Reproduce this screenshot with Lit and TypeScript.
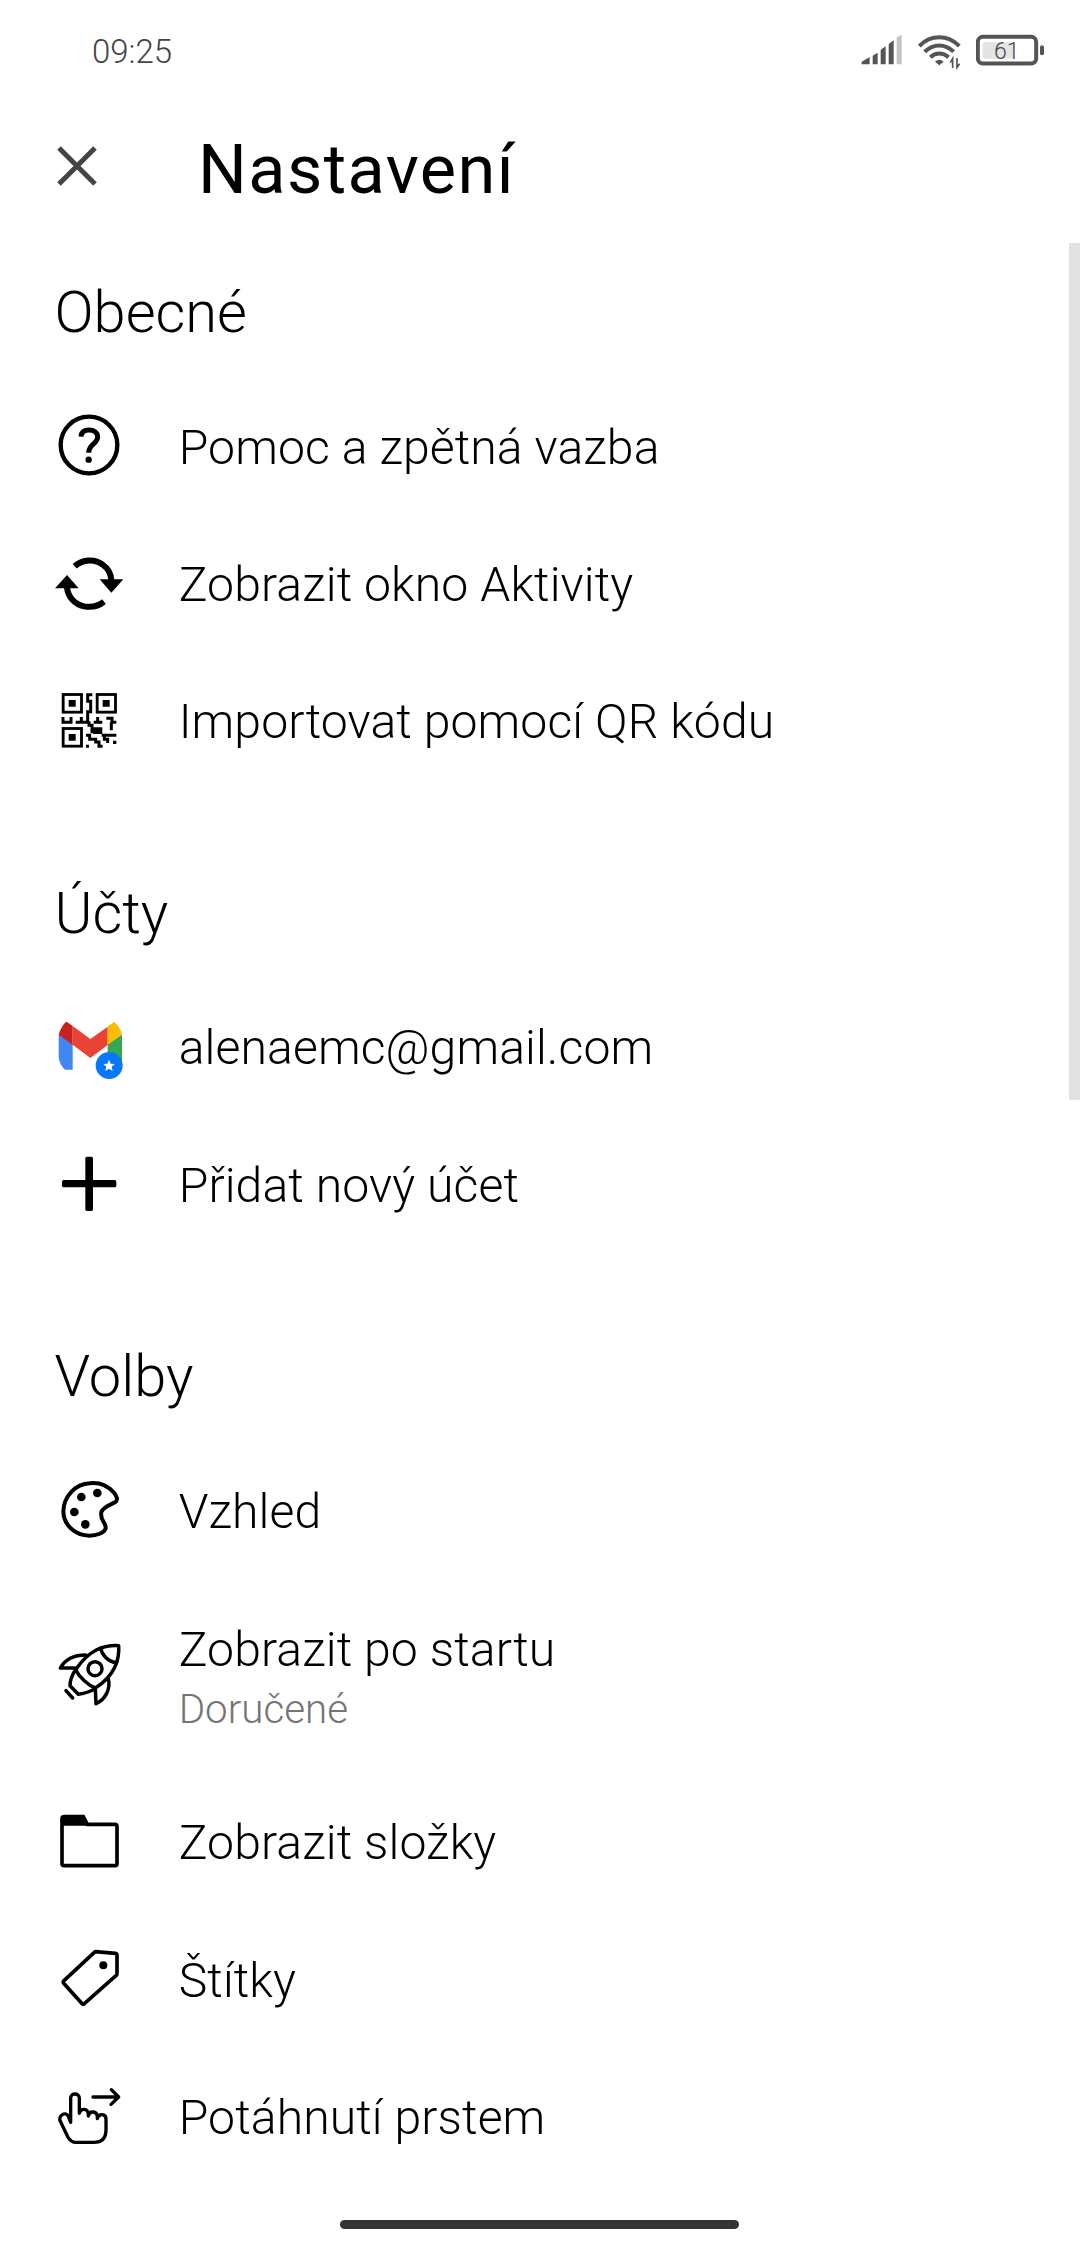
import { LitElement, html, css, svg, nothing, TemplateResult } from "lit";
import { customElement, property } from "lit/decorators.js";

type Item = { icon: string; label: string; note?: string };
type Section = { title: string; items: Item[] };

const SECTIONS: Section[] = [
  {
    title: "Obecné",
    items: [
      { icon: "help", label: "Pomoc a zpětná vazba" },
      { icon: "sync", label: "Zobrazit okno Aktivity" },
      { icon: "qr", label: "Importovat pomocí QR kódu" },
    ],
  },
  {
    title: "Účty",
    items: [
      { icon: "gmail", label: "alenaemc@gmail.com" },
      { icon: "plus", label: "Přidat nový účet" },
    ],
  },
  {
    title: "Volby",
    items: [
      { icon: "palette", label: "Vzhled" },
      { icon: "rocket", label: "Zobrazit po startu", note: "Doručené" },
      { icon: "folder", label: "Zobrazit složky" },
      { icon: "tag", label: "Štítky" },
      { icon: "swipe", label: "Potáhnutí prstem" },
    ],
  },
];

// Each glyph is drawn on a 216-unit square whose top offset is `top`.
const ICONS: Record<string, { top: number; art: TemplateResult }> = {
  help: {
    top: 28,
    art: svg`
      <circle cx="148" cy="136" r="85" fill="none" stroke="#000" stroke-width="13"/>
      <path d="M124 111C125 98 134 91 148 91C164 91 174 99 174 112C174 132 147 134 147 159" fill="none" stroke="#000" stroke-width="15"/>
      <circle cx="147" cy="180" r="9.500"/>`,
  },
  sync: {
    top: 440,
    art: svg`
      <path d="M105 498C130 476 166 475 189 493C206 505 214 520 215 540" fill="none" stroke="#000" stroke-width="18"/>
      <path d="M180 537H251L215 577Z"/>
      <path d="M82 562C85 590 105 612 133 618C156 622 176 618 193 604" fill="none" stroke="#000" stroke-width="18"/>
      <path d="M46 564H117L82 524Z"/>`,
  },
  qr: {
    top: 12,
    art: svg`
      <g fill="none" stroke="#000" stroke-width="8.500">
        <rect x="70.500" y="43.500" width="55" height="53"/>
        <rect x="172.500" y="43.500" width="55" height="53"/>
        <rect x="70.500" y="145.500" width="55" height="53"/>
      </g>
      <path d="M87 60h21v20H87zM189 60h21v20h-21zM87 162h21v20H87z"/>
      <g fill="none" stroke="#000" stroke-width="9">
        <path d="M158 44H144V64H153V95H144V126"/>
        <path d="M70 111V127H94V111M108 127H144M125 111V127M148 124V136H157V160M162 127H188M174 111V127"/>
        <path d="M200 115H217V127H230M215 127V151"/>
        <path d="M139 166H150V178H168V186H178V199H189M186 166H230M194 166V178H204V189M139 199H148"/>
      </g>
      <path d="M160 142h28v20h-28zM220 182h10v10h-10z"/>`,
  },
  gmail: {
    top: 30,
    art: svg`
      <path d="M57 103L99 133V209H76Q60 196 57 172Z" fill="#4285f4"/>
      <path d="M204 133L247 103V209H204Z" fill="#34a853"/>
      <path d="M82 66L99 78V135L57 104Q62 84 78 66Z" fill="#c5221f"/>
      <path d="M99 78L152 117L204 80V135L152 174L99 134Z" fill="#ea4335"/>
      <path d="M204 79L224 66Q241 80 247 104L204 134Z" fill="#fbbc04"/>
      <circle cx="208.500" cy="196.500" r="40.500" fill="#0877f9"/>
      <path d="M208 179L213 191L225 192L216 200L219 213L208 206L197 213L200 200L191 192L203 191Z" fill="#fff"/>`,
  },
  plus: {
    top: 442,
    art: svg`
      <rect x="67" y="541" width="163" height="22" rx="5"/>
      <rect x="137" y="471" width="23" height="163" rx="5"/>`,
  },
  palette: {
    top: 39,
    art: svg`
      <path d="M150 70C180 66 206 80 222 97C232 108 236 121 226 127C210 135 192 140 185 156C180 182 200 188 198 205C194 219 170 227 150 227C105 226 72 195 71 154C72 108 108 72 150 70Z" fill="none" stroke="#000" stroke-width="12"/>
      <circle cx="173" cy="99" r="13"/><circle cx="125" cy="111" r="13"/>
      <circle cx="104" cy="156" r="13"/><circle cx="137" cy="193" r="13"/>`,
  },
  rocket: {
    top: 56,
    art: svg`
      <g fill="none" stroke="#000" stroke-width="10.500" stroke-linejoin="round" stroke-linecap="round">
        <path d="M237 76C190 74 148 89 108 148C118 170 145 195 167 203C226 167 240 116 237 76Z"/>
        <path d="M183 84C187 104 204 122 229 128"/>
        <circle cx="166" cy="145" r="21"/>
        <path d="M138 104C98 104 76 118 62 143H106"/>
        <path d="M107 149C96 166 91 180 91 196L116 222C135 219 151 215 166 205"/>
        <path d="M206 176C214 206 196 238 169 250L167 206"/>
        <path d="M79 211L99 233"/>
      </g>`,
  },
  folder: {
    top: 13,
    art: svg`
      <path d="M67 55Q67 48 74 48H131L143 71H226Q232 71 232 77V189Q232 195 226 195H74Q67 195 67 189Z" fill="none" stroke="#000" stroke-width="11"/>
      <path d="M66 47H131L143 75H66Z"/>`,
  },
  tag: {
    top: 425,
    art: svg`
      <path d="M168 454L227 459Q232 460 232 465V520Q232 524 228 527L134 610Q130 613 126 609L72 549Q69 545 73 541L164 456Q166 454 168 454Z" fill="none" stroke="#000" stroke-width="11"/>
      <circle cx="191" cy="495" r="12"/>`,
  },
  swipe: {
    top: 27,
    art: svg`
      <g fill="none" stroke="#000" stroke-width="10" stroke-linejoin="round" stroke-linecap="round">
        <path d="M93 154V81C93 65 119 65 119 81V127C121 111 145 110 146 130V135C149 118 172 119 173 138V143C177 125 199 128 199 144V176C199 200 187 214 162 214H108C96 214 91 208 85 199L62 151C55 135 76 120 85 134L93 154"/>
        <path d="M160 78H236M215 56L237 78L214 100"/>
      </g>`,
  },
};

@customElement("setting-icon")
class SettingIcon extends LitElement {
  @property() name = "";
  static styles = css`
    :host { display: block; width: 72px; height: 72px; }
    svg { display: block; width: 100%; height: 100%; overflow: visible; }
  `;
  render() {
    const icon = ICONS[this.name];
    if (!icon) return nothing;
    return html`<svg viewBox="40 ${icon.top} 216 216" aria-hidden="true">${icon.art}</svg>`;
  }
}

@customElement("status-bar")
class StatusBar extends LitElement {
  static styles = css`
    :host {
      display: flex; align-items: center; justify-content: space-between;
      box-sizing: border-box; height: 101px; padding: 0 35px 0 92px;
    }
    .clock { font-size: 33px; line-height: 38px; font-weight: 300; color: #444; padding-top: 2px; }
    .icons { display: flex; gap: 15px; }
    svg { display: block; height: 60px; }
    .signal { width: 42px; }
    .wifi { width: 43.300px; }
    .battery { width: 69px; }
    .level { font: 300 69px Roboto, sans-serif; }
  `;
  render() {
    return html`
      <div class="clock">09:25</div>
      <div class="icons">
        <svg class="signal" viewBox="64 2 126 180" fill="#555">
          <path d="M66 124L90 110V132H66ZM99 109Q99 106 102 104L114 97V132H99ZM123 92Q123 88 126 86L138 78V132H123ZM147 74Q147 71 150 69L162 60V132H147Z"/>
          <path d="M171 54Q171 51 174 49L186 44V132H171Z" fill="#c4c4c4"/>
        </svg>
        <svg class="wifi" viewBox="233 2 130 180" fill="none" stroke="#555" stroke-width="12">
          <path d="M237 77C271 42 322 42 357 77"/>
          <path d="M253 94C280 69 314 69 340 94"/>
          <path d="M270 111C286 96 308 96 325 111"/>
          <path d="M284 124Q297 113 310 124L297 135Z" fill="#555" stroke="none"/>
          <path d="M337 143V115L330 127M350 113V141L358 130" stroke-width="5"/>
        </svg>
        <svg class="battery" viewBox="408 2 207 180">
          <rect x="413.500" y="49.500" width="175" height="80" rx="15" fill="none" stroke="#555" stroke-width="12"/>
          <rect x="428" y="65" width="92" height="50" rx="8" fill="#e4e4e4"/>
          <rect x="600" y="75" width="12" height="30" rx="6" fill="#555"/>
          <text class="level" x="462" y="117" fill="#444">61</text>
        </svg>
      </div>
    `;
  }
}

@customElement("app-root")
class AppRoot extends LitElement {
  static styles = css`
    :host {
      display: flex; flex-direction: column; position: relative;
      box-sizing: border-box; width: 1080px; height: 2248px; overflow: hidden;
      background: #fff; color: #000; font-family: Roboto, "Noto Sans", sans-serif;
    }
    .header { display: flex; align-items: center; box-sizing: border-box; height: 141px; padding-left: 57px; padding-bottom: 4px; gap: 101px; }
    .close { display: block; width: 40px; height: 40px; margin-bottom: 7px; }
    .title { margin: 0; font-size: 68.500px; line-height: 80px; font-weight: 400; letter-spacing: 1.400px; }
    .list { flex: 1; }
    .heading {
      margin: 0; box-sizing: border-box; height: 188.700px; padding-top: 90px;
      font-size: 57.750px; line-height: 68px; font-weight: 330; padding-left: 54.500px;
    }
    .section:first-child .heading { height: 134.600px; padding-top: 35.900px; }
    .row { display: flex; align-items: center; height: 137.330px; padding-left: 53.300px; gap: 53.400px; }
    .row.tall { height: 194.330px; }
    .text { display: flex; flex-direction: column; padding-top: 5px; gap: 8px; }
    .label { font-size: 48.125px; line-height: 56px; font-weight: 330; letter-spacing: 0.100px; }
    .note { font-size: 40.300px; line-height: 48px; font-weight: 330; color: #757575; }
    .scrollbar { position: absolute; right: 0; top: 243px; width: 11px; height: 857px; background: #e2e2e2; }
    .home { position: absolute; left: 340px; top: 2220px; width: 399px; height: 9px; border-radius: 5px; background: #333; }
  `;
  render() {
    return html`
      <status-bar></status-bar>
      <header class="header">
        <svg class="close" viewBox="0 0 40 40"><path d="M2 2L38 38M38 2L2 38" stroke="#444" stroke-width="5"/></svg>
        <h1 class="title">Nastavení</h1>
      </header>
      <main class="list">
        ${SECTIONS.map(
          (s) => html`<section class="section">
            <h2 class="heading">${s.title}</h2>
            ${s.items.map(
              (i) => html`<div class="row ${i.note ? "tall" : ""}">
                <setting-icon name=${i.icon}></setting-icon>
                <div class="text">
                  <span class="label">${i.label}</span>
                  ${i.note ? html`<span class="note">${i.note}</span>` : nothing}
                </div>
              </div>`
            )}
          </section>`
        )}
      </main>
      <div class="scrollbar"></div>
      <div class="home"></div>
    `;
  }
}
